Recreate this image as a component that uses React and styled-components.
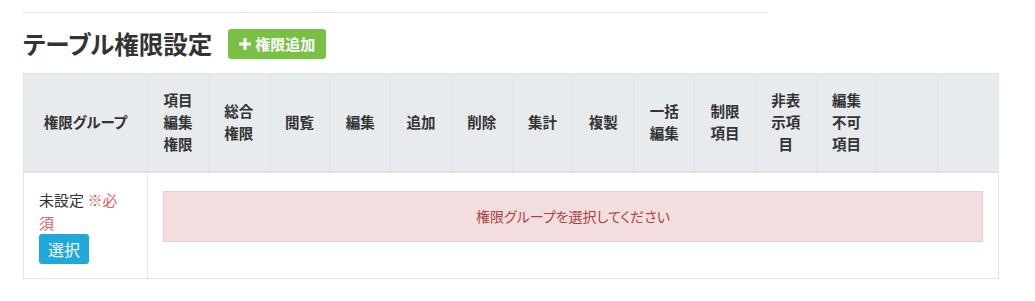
import React from 'react';
import styled, { createGlobalStyle } from 'styled-components';

const GlobalStyle = createGlobalStyle`
	body {
		margin: 0;
		background: #fff;
		font-family: "Noto Sans CJK JP", "Noto Sans", sans-serif;
		font-feature-settings: "palt";
		color: #333;
	}
	* {
		box-sizing: border-box;
	}
`;

const Page = styled.div`
	padding: 12px 0 0 23px;
`;

const Rule = styled.div`
	width: 745px;
	border-top: 1px solid #e3e3e3;
`;

const TitleRow = styled.div`
	display: flex;
	align-items: center;
	gap: 16px;
	height: 60px;
	padding-top: 1px;
`;

const Title = styled.h2`
	margin: 0;
	font-size: 24.5px;
	font-weight: 700;
	color: #333;
`;

const AddButton = styled.button`
	display: flex;
	align-items: center;
	gap: 4px;
	height: 30px;
	padding: 0 11px 0 11px;
	border: none;
	border-radius: 3px;
	background: #78c145;
	color: #fff;
	font-family: inherit;
	font-feature-settings: "palt";
	font-size: 15px;
	font-weight: 700;
	cursor: pointer;
`;

const Table = styled.table`
	width: 976px;
	border-collapse: collapse;
	table-layout: fixed;
	border: 1px solid #e1e4e8;
`;

const Th = styled.th`
	width: ${(props) => props.w || 'auto'};
	padding: 15px 10px;
	background: #e8ebee;
	border-left: 1px solid #e0e3e7;
	border-bottom: 2px solid #dde1e5;
	font-size: 14.5px;
	font-weight: 700;
	line-height: 22px;
	text-align: center;
	vertical-align: middle;
	color: #333;
	height: 98px;
`;

const Td = styled.td`
	padding: 15px 15px 14px;
	border-left: 1px solid #e1e4e8;
	vertical-align: top;
	font-size: 15px;
	line-height: 23px;
`;

const Required = styled.span`
	color: #f05a5a;
`;

const SelectButton = styled.button`
	display: block;
	height: 30px;
	padding: 0 9px;
	border: none;
	border-radius: 3px;
	background: #1fa8da;
	color: #fff;
	font-family: inherit;
	font-feature-settings: "palt";
	font-size: 16px;
	cursor: pointer;
`;

const Alert = styled.div`
	margin: 3px 0 20px;
	padding: 14px 15px;
	background: #f2dede;
	border: 1px solid #ebccd1;
	color: #a94442;
	font-size: 14px;
	line-height: 21px;
	text-align: center;
`;

const columns = [
	['項目', '編集', '権限'],
	['総合', '権限'],
	['閲覧'],
	['編集'],
	['追加'],
	['削除'],
	['集計'],
	['複製'],
	['一括', '編集'],
	['制限', '項目'],
	['非表', '示項', '目'],
	['編集', '不可', '項目'],
	[],
	[],
];

function PlusIcon() {
	return (
		<svg width="12" height="12" viewBox="0 0 12 12">
			<path d="M4.5 0h3v4.5H12v3H7.5V12h-3V7.5H0v-3h4.5z" fill="#fff" />
		</svg>
	);
}

function App() {
	return (
		<Page>
			<GlobalStyle />
			<Rule />
			<TitleRow>
				<Title>テーブル権限設定</Title>
				<AddButton>
					<PlusIcon />
					権限追加
				</AddButton>
			</TitleRow>
			<Table>
				<thead>
					<tr>
						<Th w="124px">権限グループ</Th>
						{columns.map((lines, i) => (
							<Th key={i}>
								{lines.map((l, j) => (
									<div key={j}>{l}</div>
								))}
							</Th>
						))}
					</tr>
				</thead>
				<tbody>
					<tr>
						<Td>
							未設定 <Required>※必須</Required>
							<SelectButton>選択</SelectButton>
						</Td>
						<Td colSpan={14}>
							<Alert>権限グループを選択してください</Alert>
						</Td>
					</tr>
				</tbody>
			</Table>
		</Page>
	);
}

export default App;
